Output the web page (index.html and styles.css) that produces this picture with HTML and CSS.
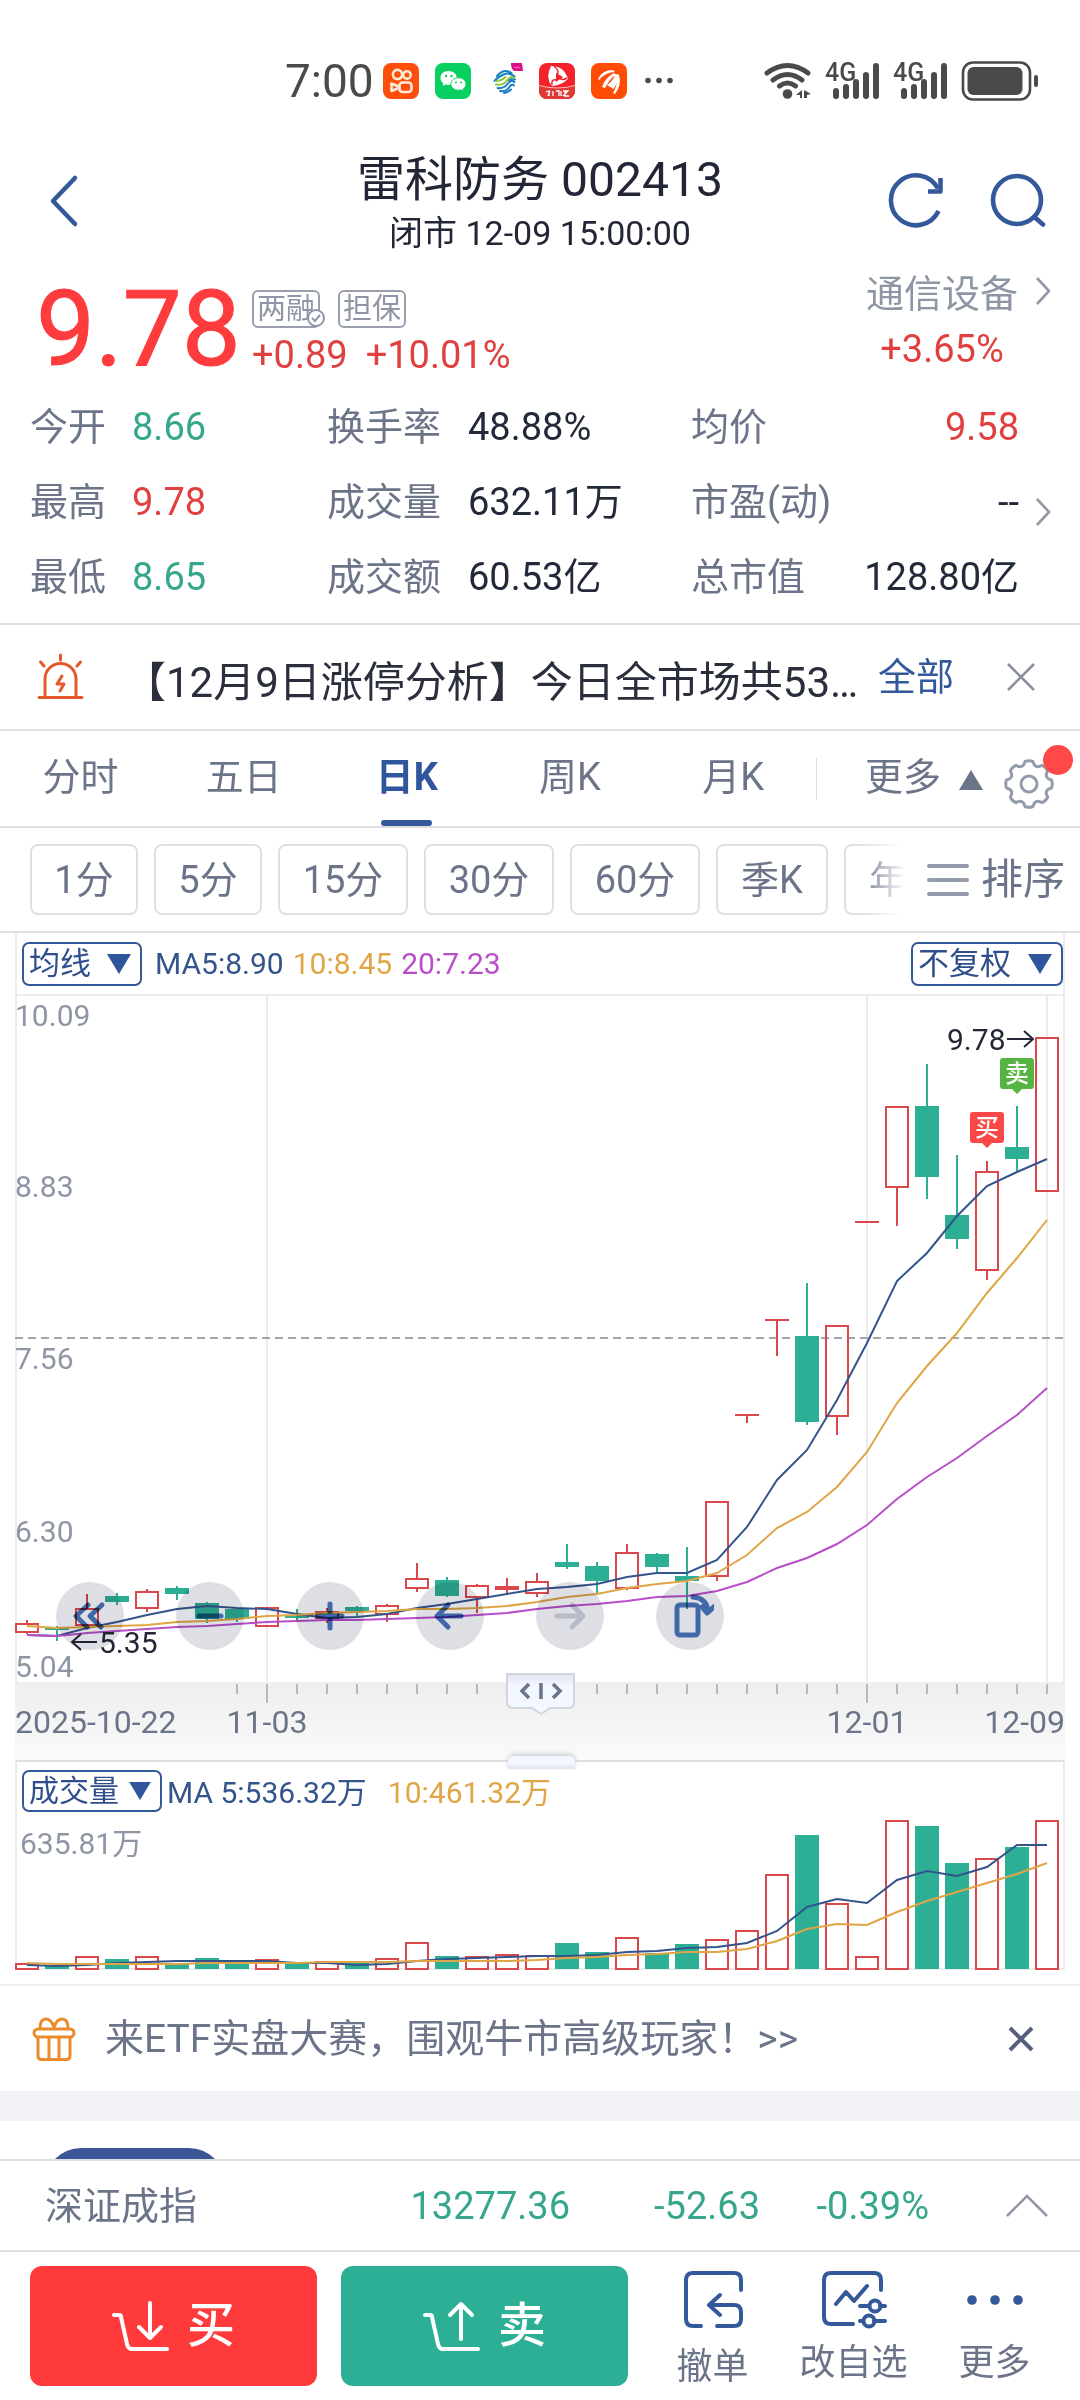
FILE: index.html
```html
<!DOCTYPE html>
<html lang="zh-CN">
<head>
<meta charset="utf-8">
<meta name="viewport" content="width=device-width">
<title>雷科防务 002413</title>
<link rel="stylesheet" href="styles.css">
</head>
<body>
<div class="statusbar">
  <span class="clock">7:00</span>
  <div class="apps">
    <svg width="36" height="36" viewBox="0 0 36 36"><rect width="36" height="36" rx="8" fill="#ff4e0b"/><g fill="none" stroke="#fdebd8" stroke-width="2.6"><circle cx="14.5" cy="11.5" r="4.6"/><circle cx="24" cy="12" r="3.8"/><rect x="16.5" y="19.5" width="12" height="9.5" rx="3"/><path d="M8.500 20.500v7.500l6-2.500v-2.500z" stroke-linejoin="round"/></g></svg>
    <svg width="36" height="36" viewBox="0 0 36 36"><rect width="36" height="36" rx="8" fill="#07d060"/><path d="M13.500 8C8.500 8 5.500 11.200 5.500 15c0 2.200 1.100 4 2.900 5.300l-.8 2.700 3-1.600c1 .3 2 .4 3.400.4 4.600-.2 7.700-3.200 7.700-6.900C21.700 11 18.300 8 13.500 8z" fill="#fff"/><path d="M23.500 14.800c-4.300 0-7.600 2.700-7.600 6.200s3.300 6.200 7.600 6.200c1 0 1.900-.1 2.700-.4l2.500 1.400-.6-2.300c1.800-1.200 2.900-2.900 2.900-4.900 0-3.500-3.300-6.200-7.500-6.200z" fill="#fff" stroke="#07d060" stroke-width=".9"/><g fill="#07d060"><circle cx="11" cy="13" r="1.200"/><circle cx="16.500" cy="13" r="1.200"/><circle cx="21" cy="19.500" r="1"/><circle cx="26" cy="19.500" r="1"/></g></svg>
    <svg width="36" height="36" viewBox="0 0 36 36"><path d="M24 0h11l1 8h-9q-3-2-3-8z" fill="#d8108a"/><path d="M27 4l2 1 2-1 2 1" stroke="#f7b" fill="none"/><g fill="none" stroke-width="2" stroke-linecap="round"><path d="M10 13q7-8 14.500-3M7.500 18q3-4 9-6.500t11 2M28 16.500q-3-2-6 1" stroke="#1a7fc0"/><path d="M9 21.500q8 1 11-4t6.500-2.500M9.500 18q5 0 9-4" stroke="#8fc640"/><path d="M10.500 25q6 1 10-4t7-2M13 28q6 1 9-3.500t5-2M17 30q4-.5 7-3.500" stroke="#1a7fc0"/></g></svg>
    <svg width="36" height="36" viewBox="0 0 36 36"><rect width="36" height="36" rx="8" fill="#f4232b"/><path d="M0 23q18 5 36 0v5a8 8 0 0 1-8 8H8a8 8 0 0 1-8-8z" fill="#dd3a35"/><path d="M0 22.500q18 5 36 0" stroke="#fbb" fill="none"/><path d="M12 3q13 0 17 13-6 6-16 7-7-8-1-20z" fill="#fff"/><path d="M17 10l7 4-7 5z" fill="#f4232b"/><path d="M15 3q6 5 3 9M28 15q-5 3-7 0M13 22q-1-6 4-5" stroke="#f4232b" fill="none" stroke-width="1.500"/><path d="M7 29l3-1v5M11 28l-2 5M14 28v5M17 28h3v5M22 28v5M24 28h5l-5 5M26 28v5h4" stroke="#fff" fill="none" stroke-width="1.300"/></svg>
    <svg width="36" height="36" viewBox="0 0 36 36"><rect width="36" height="36" rx="8" fill="#ff4d05"/><path d="M7 16Q11 7 22 7l2 2q-9 0-16 8zM11 24q3-9 12-14l2 1.500q-6 4-11 13.500zM16 22q6-4 8-10l2.500-1q1 8-4 15zM22 30q5-8 4-19l2 1q3 10-4 19z" fill="#fff"/></svg>
    <svg class="more-dots" width="28" height="36" viewBox="0 0 28 36" fill="#4a4a4a"><circle cx="3" cy="17.500" r="2.800"/><circle cx="14" cy="17.500" r="2.800"/><circle cx="25" cy="17.500" r="2.800"/></svg>
  </div>
  <svg class="signals" width="276" height="44" viewBox="762 58 276 44" fill="#4a4a4a">
    <g fill="none" stroke="#4a4a4a" stroke-width="5" stroke-linecap="round"><path d="M767 72q20.500-15 41 0M773 79q14.500-11 29 0M779.500 85q8-6 16 0"/></g>
    <circle cx="787.500" cy="93" r="4.800"/><path d="M796 94l6-5v8h-2v-3zM804 89l7 4-4 1v3h-3z"/>
    <g id="cell"><text x="825" y="80" class="net">4G</text><rect x="833" y="87" width="6" height="11" rx="3"/><rect x="843" y="83" width="6" height="15" rx="3"/><rect x="853" y="78" width="6" height="20" rx="3"/><rect x="863" y="71" width="6" height="27" rx="3"/><rect x="873" y="62" width="6" height="36" rx="3"/></g>
    <use href="#cell" x="68"/>
    <rect x="963" y="61.500" width="67" height="37" rx="10" fill="none" stroke="#4a4a4a" stroke-width="2.600"/><rect x="967.500" y="66" width="55" height="28" rx="6"/><rect x="1034" y="74" width="4" height="12" rx="2"/>
  </svg>
</div>

<header class="header">
  <button class="icon-btn back" aria-label="返回"><svg width="30" height="54" viewBox="0 0 30 54" fill="none" stroke="#34599a" stroke-width="4.500" stroke-linecap="round" stroke-linejoin="round"><path d="M26 4L4 27l22 23"/></svg></button>
  <div class="title">
    <h1>雷科防务 002413</h1>
    <p>闭市 12-09 15:00:00</p>
  </div>
  <div class="actions">
    <button class="icon-btn" aria-label="刷新"><svg width="58" height="60" viewBox="886 172 58 60" fill="none" stroke="#34599a" stroke-width="4.600"><path d="M938.500 212A25 25 0 1 1 938 189.500"/><path d="M928 192.500h12.500V179" stroke-linejoin="round"/></svg></button>
    <button class="icon-btn" aria-label="搜索"><svg width="58" height="60" viewBox="988 169 58 60" fill="none" stroke="#34599a" stroke-width="4.600" stroke-linecap="round"><circle cx="1017" cy="198" r="24"/><path d="M1035 215.500l8 7"/></svg></button>
  </div>
</header>

<section class="quote">
  <div class="price">9.78</div>
  <div class="change">
    <div class="tags"><span class="tag">两融<svg width="20" height="20" viewBox="0 0 20 20"><circle cx="10" cy="10" r="8" fill="#fff" stroke="#8f94a6" stroke-width="2"/><path d="M6 10l3 3 5-6" fill="none" stroke="#8f94a6" stroke-width="2"/></svg></span><span class="tag">担保</span></div>
    <div class="delta"><span>+0.89</span><span>+10.01%</span></div>
  </div>
  <a class="sector" href="#sector">
    <span class="sector-name">通信设备</span>
    <svg width="18" height="30" viewBox="0 0 18 30" class="chev"><path d="M3 2l12 13L3 28"/></svg>
    <span class="sector-pct">+3.65%</span>
  </a>
</section>

<section class="stats">
  <dl>
    <div><dt>今开</dt><dd class="down">8.66</dd></div><div><dt>换手率</dt><dd>48.88%</dd></div><div><dt>均价</dt><dd class="up">9.58</dd></div>
    <div><dt>最高</dt><dd class="up">9.78</dd></div><div><dt>成交量</dt><dd>632.11万</dd></div><div><dt>市盈(动)</dt><dd>--</dd></div>
    <div><dt>最低</dt><dd class="down">8.65</dd></div><div><dt>成交额</dt><dd>60.53亿</dd></div><div><dt>总市值</dt><dd>128.80亿</dd></div>
  </dl>
  <button class="icon-btn" aria-label="展开"><svg width="18" height="30" viewBox="0 0 18 30" class="chev"><path d="M3 2l12 13L3 28"/></svg></button>
</section>

<section class="alert">
  <svg width="48" height="48" viewBox="0 0 48 48" fill="none" stroke="#e5572c" stroke-width="3" stroke-linecap="round" stroke-linejoin="round"><path d="M3 44.500h43M9 44V26a15.500 15.500 0 0 1 31 0v18M24.500 2v5M4.500 9l3.500 4M44.500 9L41 13"/><path d="M26 23l-5 8h7l-4 7"/></svg>
  <p>【12月9日涨停分析】今日全市场共53…</p>
  <a href="#all">全部</a>
  <button class="icon-btn" aria-label="关闭"><svg width="30" height="30" viewBox="0 0 30 30" fill="none" stroke="#8a8fa0" stroke-width="2.600"><path d="M2 2l26 26M28 2L2 28"/></svg></button>
</section>

<nav class="tabs">
  <button>分时</button><button>五日</button><button class="active">日K</button><button>周K</button><button>月K</button>
  <button class="more">更多<svg width="24" height="20" viewBox="0 0 24 20"><path d="M12 0l12 20H0z" fill="#6b7488"/></svg></button>
  <button class="gear" aria-label="设置"><svg width="50" height="50" viewBox="-25 -25 50 50" fill="none" stroke="#949cab" stroke-width="3" stroke-linejoin="round"><path d="M-4-22.500Q0-24 4-22.500Q6-14.500 13.100-18.700Q17-17 18.700-13.100Q14.500-6 22.500-4Q24 0 22.500 4Q14.500 6 18.700 13.100Q17 17 13.100 18.700Q6 14.500 4 22.500Q0 24-4 22.500Q-6 14.500-13.100 18.700Q-17 17-18.700 13.100Q-14.500 6-22.500 4Q-24 0-22.500-4Q-14.500-6-18.700-13.100Q-17-17-13.100-18.700Q-6-14.500-4-22.500Z"/><circle r="8"/></svg><i class="dot"></i></button>
</nav>

<div class="periods">
  <div class="period-list"><button>1分</button><button>5分</button><button class="wide">15分</button><button class="wide">30分</button><button class="wide">60分</button><button class="unit">季K</button><button class="unit">年K</button></div>
  <button class="sort"><svg width="42" height="36" viewBox="0 0 42 36" stroke="#949cab" stroke-width="4" stroke-linecap="round"><path d="M2 4h38M2 18h38M2 32h38"/></svg>排序</button>
</div>

<main class="charts">
  <div class="legend">
    <label class="picker"><select aria-label="主图指标"><option>均线</option></select><svg width="24" height="20" viewBox="0 0 24 20"><path d="M0 0h24L12 20z"/></svg></label>
    <span class="ma5">MA5:8.90</span><span class="ma10">10:8.45</span><span class="ma20">20:7.23</span>
    <label class="picker adjust"><select aria-label="复权方式"><option>不复权</option></select><svg width="24" height="20" viewBox="0 0 24 20"><path d="M0 0h24L12 20z"/></svg></label>
  </div>
  <div class="kline">
    <svg id="kline" class="plot" viewBox="0 996 1080 764" fill="none">
      <defs>
        <linearGradient id="band" x1="0" y1="0" x2="0" y2="1"><stop offset="0" stop-color="#eeeeee"/><stop offset="1" stop-color="#fafafa"/></linearGradient>
        <linearGradient id="grip" x1="0" y1="0" x2="0" y2="1"><stop offset="0" stop-color="#dfe5f2"/><stop offset=".3" stop-color="#f3f7ff"/></linearGradient>
      </defs>
      <rect x="15" y="1682" width="1050" height="78" fill="url(#band)"/>
      <path d="M16 996V1682M267 996V1682M867 996V1682M1047 996V1682M1064 996V1682" stroke="#ececee" stroke-width="2"/>
      <path d="M15 1338H1065" stroke="#a0a5ae" stroke-width="2" stroke-dasharray="8 5"/>
    </svg>
    <div class="tools">
      <button aria-label="最早"><svg width="40" height="40" viewBox="0 0 40 40"><path d="M18 9L6 20l11 11M32 9L20 20l11 11"/></svg></button>
      <button aria-label="缩小"><svg width="40" height="40" viewBox="0 0 40 40"><path d="M9 20h22"/></svg></button>
      <button aria-label="放大"><svg width="40" height="40" viewBox="0 0 40 40"><path d="M8 20h24M20 8v24"/></svg></button>
      <button aria-label="左移"><svg width="40" height="40" viewBox="0 0 40 40"><path d="M31 20H7M18 9L7 20l11 11"/></svg></button>
      <button aria-label="右移" class="off"><svg width="40" height="40" viewBox="0 0 40 40"><path d="M7 20h26M22 9l11 11-11 11"/></svg></button>
      <button aria-label="横屏"><svg width="48" height="48" viewBox="0 0 48 48"><rect x="11" y="13" width="21" height="30" rx="3"/><path d="M27 5q14 1 15 15M36 15l5 6 8-7"/></svg></button>
    </div>
    <i class="handle"></i>
  </div>
  <div class="legend volume">
    <label class="picker"><select aria-label="副图指标"><option>成交量</option></select><svg width="22" height="18" viewBox="0 0 24 20"><path d="M0 0h24L12 20z"/></svg></label>
    <span class="ma5">MA 5:536.32万</span><span class="ma10 apart">10:461.32万</span>
  </div>
  <svg id="volume" class="plot" viewBox="0 1820 1080 164" fill="none">
    <path d="M16 1820V1969H1064V1820" stroke="#ececee" stroke-width="2"/>
    <text x="20" y="1854" class="axis">635.81万</text>
  </svg>
</main>

<section class="promo">
  <svg width="44" height="46" viewBox="0 0 44 46" fill="none" stroke="#ea8b2d" stroke-width="3" stroke-linejoin="round"><rect x="2" y="13" width="40" height="8" rx="4"/><path d="M6 21v19q0 3.500 3.500 3.500h25q3.500 0 3.500-3.500V21M17 22v21M27 22v21M8 12q0-9 6-9 5 0 8 8 3-8 8-8 6 0 6 9"/></svg>
  <p>来ETF实盘大赛，围观牛市高级玩家！&gt;&gt;</p>
  <button class="icon-btn" aria-label="关闭"><svg width="26" height="26" viewBox="0 0 26 26" fill="none" stroke="#56607a" stroke-width="4"><path d="M2 2l22 22M24 2L2 24"/></svg></button>
</section>
<div class="divider"></div>
<div class="peek"><span></span></div>

<a class="index" href="#index">
  <span class="index-name">深证成指</span><span>13277.36</span><span>-52.63</span><span>-0.39%</span>
  <svg width="42" height="24" viewBox="0 0 42 24" class="chev"><path d="M1 22L21 2l20 20"/></svg>
</a>

<footer class="trade">
  <div class="orders">
    <button class="buy"><svg width="58" height="52" viewBox="0 0 58 52"><path d="M2 15h5q2 0 2 2l6 27q1 5 5 5h35M38 3v34M27 27l11 11 11-11"/></svg>买</button>
    <button class="sell"><svg width="58" height="52" viewBox="0 0 58 52"><path d="M2 15h5q2 0 2 2l6 27q1 5 5 5h35M38 39V4M27 15L38 4l11 11"/></svg>卖</button>
  </div>
  <div class="acts">
    <button class="act-cancel"><svg width="60" height="60" viewBox="0 0 60 60"><path d="M18 56H10q-7 0-7-7V10Q3 3 10 3h41q7 0 7 7v10M34 56h17q7 0 7-7V42q0-7-7-7H26M37 25L26 35l11 10"/></svg>撤单</button>
    <button><svg width="66" height="60" viewBox="0 0 66 60"><path d="M32 54H10q-7 0-7-7V10Q3 3 10 3h43q7 0 7 7v10M15 34L25 22l8 9 13-15M39 36h8M59 36h5M39 51h2M53 51h11"/><circle cx="54" cy="36" r="5.500"/><circle cx="48" cy="51" r="5.500"/></svg>改自选</button>
    <button><svg width="60" height="60" viewBox="0 0 60 60"><g fill="#34599a" stroke="none"><circle cx="7" cy="30" r="4.800"/><circle cx="30" cy="30" r="4.800"/><circle cx="53" cy="30" r="4.800"/></g></svg>更多</button>
  </div>
</footer>
<script src="chart.js"></script>
</body>
</html>
```
FILE: styles.css
```css
* { box-sizing: border-box; margin: 0; padding: 0; }
body {
  background: #fff;
  color: #222a3a;
  font: 38px/48px Roboto, "Noto Sans CJK SC", sans-serif;
}
button, select { font: inherit; color: inherit; background: none; border: 0; white-space: nowrap; }
a { color: inherit; text-decoration: none; }
svg { display: block; flex: none; }
.icon-btn { display: flex; align-items: center; justify-content: center; }
.chev { fill: none; stroke: #9298a6; stroke-width: 2.600; }
.up { color: #e0403f; }
.down { color: #36a68c; }

.statusbar { display: flex; align-items: center; height: 104px; padding: 58px 42px 0 285px; color: #4a4a4a; }
.clock { font-size: 46px; width: 98px; line-height: 44px; }
.apps { display: flex; gap: 16px; }
.more-dots { margin-left: 2px; }
.signals { margin-left: auto; }
.net { font: 500 25px Roboto, sans-serif; }

.header { display: grid; grid-template-columns: 1fr auto 1fr; padding: 48px 34px 0; height: 154px; color: #222636; }
.header .icon-btn { height: 98px; }
.back { justify-self: start; margin-left: 15px; }
.title { text-align: center; }
.title h1 { font-size: 48px; font-weight: 400; line-height: 56px; }
.title p { font-size: 34px; line-height: 50px; }
.actions { display: flex; gap: 44px; justify-content: flex-end; }

.quote { display: flex; padding: 12px 28px 0 36px; height: 132px; }
.price { font-size: 105px; line-height: 120px; color: #fe3b3d; width: 216px; -webkit-text-stroke: 1px #fe3b3d; }
.change { padding-top: 20px; color: #e0403f; }
.tags { display: flex; gap: 18px; }
.tag { position: relative; display: block; height: 38px; width: 68px; border: 2px solid #9a9fb0; border-radius: 6px; font-size: 29px; line-height: 34px; text-align: center; color: #8f94a6; }
.tag svg { position: absolute; right: -8px; bottom: -2px; }
.delta { display: flex; gap: 18px; line-height: 54px; }
.sector { margin-left: auto; display: grid; grid-template-columns: auto 18px; column-gap: 16px; align-content: start; justify-items: center; }
.sector .chev { margin-top: 6px; }
.sector-name { color: #8e96a5; }
.sector-pct { color: #e0403f; line-height: 62px; }

.stats { display: flex; align-items: center; padding: 0 28px 8px 30px; border-bottom: 2px solid #e0e0e2; }
.stats dl { flex: 1; display: grid; grid-template-columns: 297px 364px 1fr; }
.stats dl > div { display: flex; line-height: 75px; }
.stats dt { color: #6b7488; width: 102px; }
.stats div:nth-child(3n+2) dt { width: 141px; }
.stats div:nth-child(3n) dt { width: auto; }
.stats div:nth-child(3n) dd { margin-left: auto; }
.stats .icon-btn { margin-left: 15px; padding-top: 18px; }

.alert { display: flex; align-items: center; height: 106px; padding: 0 44px 0 36px; border-bottom: 2px solid #e0e0e2; }
.alert p { flex: 1; margin-left: 40px; padding-top: 12px; font-size: 42px; color: #2b2f3d; overflow: hidden; white-space: nowrap; }
.alert a { color: #34599a; margin-right: 52px; }

.tabs { display: grid; grid-template-columns: repeat(5, 163fr) 176fr 88fr; height: 97px; border-bottom: 2px solid #e0e0e2; color: #6b7488; }
.tabs button { display: flex; align-items: center; justify-content: center; position: relative; padding: 0 2px 4px 0; }
.tabs .active { color: #2f559c; font-weight: 700; }
.tabs .active::after { content: ""; position: absolute; bottom: 0; width: 51px; height: 6px; border-radius: 3px; background: #34599a; }
.tabs .more { gap: 18px; justify-content: flex-end; padding-right: 9px; }
.tabs .more svg { margin-top: 6px; }
.tabs .more::before { content: ""; position: absolute; left: 0; top: 27px; height: 42px; border-left: 1px solid #dcdde0; }
.gear svg { margin: 14px 12px 0 0; }
.dot { position: absolute; right: 7px; top: 14px; width: 30px; height: 30px; border-radius: 50%; background: #ff4848; }

.periods { display: flex; align-items: center; height: 105px; padding: 0 15px 0 30px; border-bottom: 2px solid #e0e0e2; color: #6b7488; }
.period-list { flex: 1; display: flex; gap: 16px; overflow: hidden; mask-image: linear-gradient(90deg, #000 calc(100% - 48px), transparent calc(100% - 2px)); }
.period-list button { flex: none; width: 108px; height: 71px; border: 2px solid #dfe0e4; border-radius: 8px; }
.period-list .wide { width: 130px; }
.period-list .unit { width: 112px; }
.sort { display: flex; align-items: center; gap: 12px; margin-left: 20px; font-size: 42px; }

.legend { display: flex; align-items: center; height: 63px; margin: 0 15px; padding-left: 5px; font-size: 30px; border: 2px solid #ececee; border-top: 0; gap: 9px; }
.picker { display: flex; align-items: center; justify-content: space-between; width: 120px; height: 44px; margin-right: 4px; padding: 0 9px 0 5px; border: 2px solid #34599a; border-radius: 7px; font-size: 31px; color: #2f4f8c; }
.picker select { appearance: none; line-height: 40px; }
.picker path { fill: #2f559c; }
.legend .adjust { width: 152px; margin: 0 0 0 auto; }
.ma5 { color: #34548c; }
.ma10 { color: #e0a545; }
.ma20 { color: #b84fc8; }
.legend.volume { height: 60px; padding-left: 5px; gap: 1px; border-top: 2px solid #e0e0e2; border-bottom: 0; }
.volume span { padding-top: 4px; }
.volume .picker { width: 140px; height: 42px; font-size: 30px; }
.apart { margin-left: 20px; }

.plot { width: 100%; height: auto; }
.plot text { font: 30px Roboto, "Noto Sans CJK SC", sans-serif; }
.plot .axis { fill: #8e96a5; }
.plot .date { fill: #6b7488; font-size: 32px; }
.plot .mark { fill: #222636; font-size: 30px; }
.plot .badge { fill: #fff; font-size: 24px; font-weight: 500; }
.kline { position: relative; }
.tools { position: absolute; left: 56px; bottom: 110px; display: flex; gap: 52px; mix-blend-mode: multiply; }
.tools button { display: flex; align-items: center; justify-content: center; width: 68px; height: 68px; border-radius: 50%; background: #dedfe5; }
.tools svg { fill: none; stroke: #4168a8; stroke-width: 5; stroke-linecap: round; stroke-linejoin: round; }
.tools .off svg { stroke: #b9bcc8; }
.handle { position: absolute; left: 47%; bottom: -9px; width: 67px; height: 13px; border-radius: 6px 6px 0 0; background: linear-gradient(#f3f7ff 50%, #dfe4f0); box-shadow: 0 -2px 4px #c9ccd4; z-index: 1; }

.promo { display: flex; align-items: center; height: 107px; padding: 0 46px 0 32px; border-top: 2px solid #f0f0f2; color: #6b7488; }
.promo p { flex: 1; margin-left: 29px; font-size: 39px; }
.divider { height: 30px; background: #f2f3f6; }
.peek { height: 38px; padding: 27px 45px 0; overflow: hidden; }
.peek span { display: block; width: 180px; height: 72px; border-radius: 36px; background: #3b5697; }

.index { display: flex; align-items: center; height: 91px; padding: 0 32px 0 45px; border-top: 2px solid #e0e0e2; color: #36a68c; }
.index-name { color: #6b7488; flex: 1; }
.index span:nth-child(n+2) { text-align: right; }
.index span:nth-child(2) { width: 162px; }
.index span:nth-child(3) { width: 190px; }
.index span:nth-child(4) { width: 169px; }
.index svg { margin-left: 77px; }

.trade { display: flex; gap: 14px; padding: 14px 15px 14px 30px; border-top: 2px solid #e0e0e2; color: #6b7488; }
.orders { flex: 598 1 0; display: grid; grid-template-columns: 1fr 1fr; gap: 24px; }
.orders button { display: flex; align-items: center; justify-content: center; gap: 17px; height: 120px; border-radius: 12px; font-size: 48px; font-weight: 500; color: #fff; }
.orders .buy { background: #ff3a3a; }
.orders .sell { background: #2caf94; }
.trade svg { fill: none; stroke: #fff; stroke-width: 4; stroke-linecap: round; stroke-linejoin: round; }
.acts { flex: 423 1 0; display: grid; grid-template-columns: repeat(3, 1fr); }
.acts button { display: flex; flex-direction: column; align-items: center; gap: 14px; padding-top: 4px; font-size: 36px; line-height: 38px; }
.acts .act-cancel { gap: 18px; }
.acts svg { stroke: #34599a; }
```
FILE: chart.js
```javascript
// One entry per trading day: [colour, body top, body bottom, wick top, wick bottom, volume bar top]
const days = [
  ['r', 1624, 1632, 1620, 1634, 1964], ['g', 1628, 1630, 1626, 1641, 1966], ['r', 1609, 1625, 1594, 1625, 1957],
  ['g', 1596, 1602, 1593, 1605, 1959], ['r', 1592, 1608, 1589, 1612, 1957], ['g', 1588, 1594, 1586, 1600, 1963],
  ['g', 1603, 1619, 1602, 1623, 1958], ['g', 1609, 1619, 1608, 1622, 1963], ['r', 1608, 1626, 1607, 1627, 1960],
  ['g', 1615, 1618, 1609, 1622, 1963], ['r', 1612, 1618, 1608, 1623, 1962], ['g', 1607, 1611, 1606, 1616, 1963],
  ['r', 1606, 1614, 1604, 1622, 1959], ['r', 1579, 1588, 1563, 1592, 1943], ['g', 1580, 1596, 1577, 1597, 1956],
  ['r', 1586, 1597, 1584, 1613, 1957], ['r', 1587, 1589, 1578, 1595, 1955], ['r', 1582, 1593, 1573, 1597, 1956],
  ['g', 1562, 1567, 1544, 1569, 1943], ['g', 1566, 1581, 1562, 1593, 1952], ['r', 1553, 1588, 1544, 1590, 1938],
  ['g', 1554, 1567, 1553, 1573, 1953], ['g', 1576, 1581, 1547, 1609, 1944], ['r', 1502, 1576, 1502, 1581, 1940],
  ['r', 1415, 1415, 1415, 1423, 1931], ['r', 1320, 1320, 1320, 1356, 1875], ['g', 1336, 1422, 1283, 1425, 1835],
  ['r', 1326, 1416, 1326, 1435, 1904], ['r', 1222, 1222, 1222, 1222, 1957], ['r', 1107, 1187, 1107, 1226, 1820],
  ['g', 1106, 1177, 1064, 1199, 1826], ['g', 1215, 1239, 1155, 1249, 1863], ['r', 1172, 1270, 1161, 1280, 1859],
  ['g', 1147, 1159, 1106, 1172, 1847], ['r', 1038, 1191, 1038, 1191, 1820]
];
const priceMA = {
  '#34548c': [1635, 1636, 1628, 1622, 1615, 1609, 1606, 1608, 1609, 1614, 1618, 1617, 1614, 1608, 1604, 1599, 1594, 1589, 1587, 1584, 1577, 1573, 1573, 1560, 1527, 1480, 1450, 1400, 1343, 1281, 1253, 1216, 1186, 1172, 1159],
  '#e0a545': [1626, 1628, 1627, 1626, 1625, 1622, 1621, 1619, 1616, 1615, 1613, 1612, 1611, 1609, 1609, 1608, 1606, 1602, 1597, 1594, 1588, 1584, 1581, 1573, 1555, 1528, 1512, 1487, 1452, 1403, 1366, 1333, 1293, 1258, 1220],
  '#b84fc8': [1635, 1636, 1633, 1631, 1629, 1627, 1626, 1624, 1622, 1621, 1620, 1620, 1619, 1618, 1617, 1615, 1613, 1609, 1606, 1604, 1601, 1597, 1596, 1591, 1582, 1568, 1558, 1544, 1525, 1499, 1477, 1458, 1436, 1415, 1388]
};
const volumeMA = {
  '#34548c': [1965, 1966, 1965, 1963, 1962, 1961, 1961, 1961, 1961, 1963, 1963, 1965, 1964, 1961, 1959, 1958, 1957, 1956, 1956, 1955, 1952, 1951, 1948, 1947, 1943, 1931, 1907, 1899, 1903, 1880, 1871, 1876, 1867, 1845, 1845],
  '#e0a545': [1963, 1964, 1964, 1964, 1964, 1964, 1963, 1963, 1963, 1963, 1962, 1962, 1962, 1961, 1961, 1961, 1961, 1960, 1958, 1957, 1955, 1954, 1952, 1952, 1949, 1941, 1929, 1924, 1925, 1912, 1901, 1892, 1883, 1874, 1863]
};
const colour = { r: '#d9484a', g: '#2caf94' };
const xOf = i => 27 + 30 * i;

function box(kind, x, top, bottom) {
  if (bottom - top < 2) return `<path d="M${x - 12} ${top}h24" stroke="${colour[kind]}" stroke-width="2"/>`;
  return kind === 'g'
    ? `<rect x="${x - 12}" y="${top}" width="24" height="${bottom - top}" fill="${colour.g}"/>`
    : `<rect x="${x - 11}" y="${top}" width="22" height="${bottom - top}" stroke="${colour.r}" stroke-width="2"/>`;
}
function lines(set) {
  return Object.entries(set).map(([c, ys]) =>
    `<polyline points="${ys.map((y, i) => xOf(i) + ',' + y).join(' ')}" stroke="${c}" stroke-width="2"/>`).join('');
}
function badge(x, top, fill, label) {
  return `<path d="M${x - 14} ${top}h28q3 0 3 3v25q0 3-3 3h-9l-5 5-5-5h-9q-3 0-3-3v-25q0-3 3-3z" fill="${fill}"/>
    <text class="badge" x="${x}" y="${top + 24}" text-anchor="middle">${label}</text>`;
}

let k = '', v = '';
days.forEach(([kind, top, bottom, high, low, vol], i) => {
  const x = xOf(i);
  k += `<path d="M${x} ${high}V${top}M${x} ${bottom}V${low}" stroke="${colour[kind]}" stroke-width="2"/>` + box(kind, x, top, bottom);
  if (i > 6) k += `<path d="M${x} 1684v${i === 8 || i === 28 ? 19 : 10}" stroke="#b4bac5" stroke-width="2"/>`;
  v += box(kind, x, vol === 1820 ? 1821 : vol, 1969);
});
k += lines(priceMA);
[['10.09', 1026], ['8.83', 1197], ['7.56', 1369], ['6.30', 1542], ['5.04', 1677]].forEach(([t, y]) => {
  k += `<text class="axis" x="15" y="${y}">${t}</text>`;
});
k += `<text class="date" x="15" y="1733">2025-10-22</text>
  <text class="date" x="267" y="1733" text-anchor="middle">11-03</text>
  <text class="date" x="867" y="1733" text-anchor="middle">12-01</text>
  <text class="date" x="1065" y="1733" text-anchor="end">12-09</text>
  <text class="mark" x="947" y="1050">9.78</text>
  <path d="M1007 1039h26M1024 1031l9 8-9 8" stroke="#222636" stroke-width="2"/>
  <text class="mark" x="99" y="1653">5.35</text>
  <path d="M97 1642H72M81 1634l-9 8 9 8" stroke="#222636" stroke-width="2"/>`;
k += badge(987, 1112, '#fa4848', '买') + badge(1017, 1058, '#56b542', '卖');
k += `<path d="M507 1674h67v28q0 6-6 6h-18l-9 6-9-6h-19q-6 0-6-6z" fill="url(#grip)" stroke="#d3d6de" stroke-width="2"/>
  <path d="M529 1684l-7 7 7 7M541 1683v16M553 1684l7 7-7 7" stroke="#6b7488" stroke-width="3.500"/>`;
document.getElementById('kline').insertAdjacentHTML('beforeend', k);
document.getElementById('volume').insertAdjacentHTML('beforeend', v + lines(volumeMA));
```
